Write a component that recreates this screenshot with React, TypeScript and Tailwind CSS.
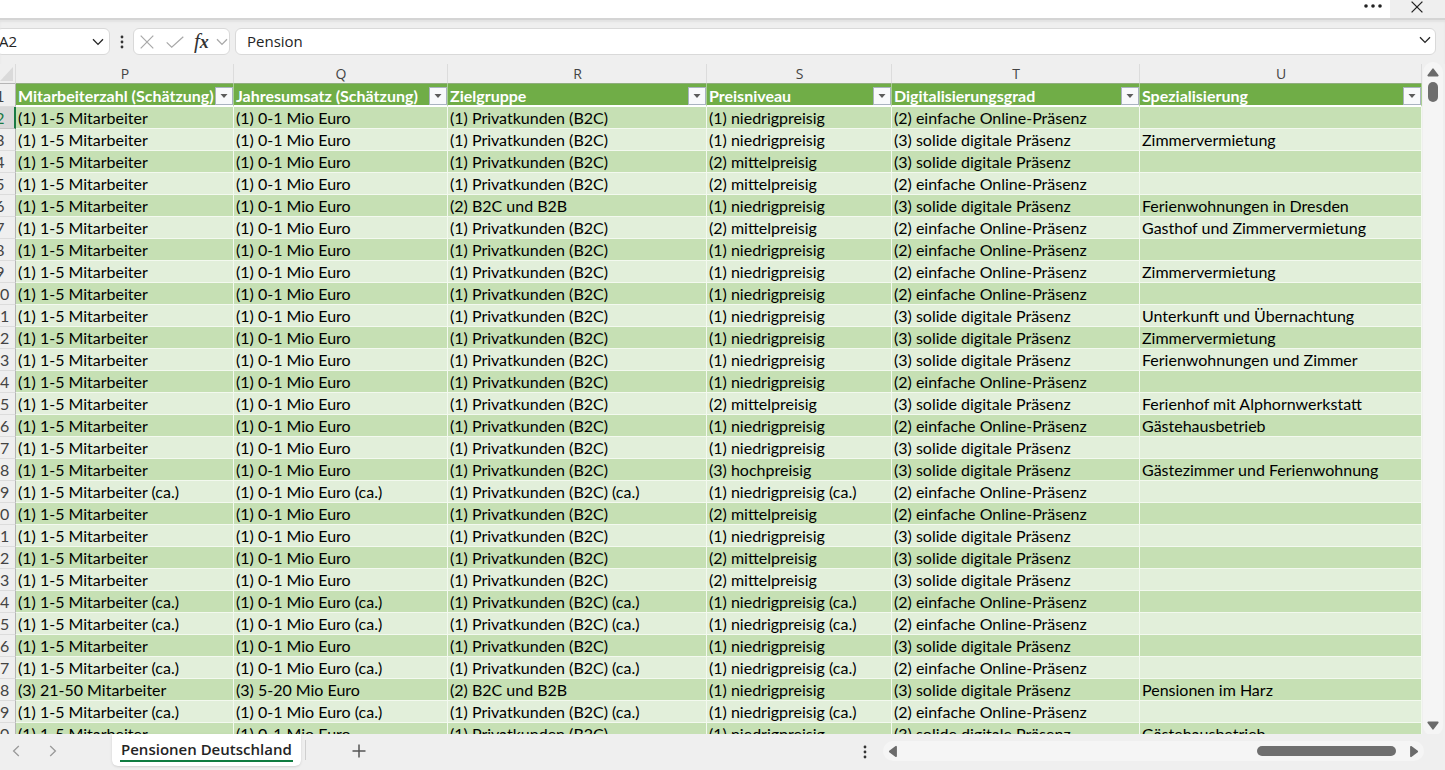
import { useState } from 'react';

type Row = [string, string, string, string, string, string];

const columns = [
  { letter: 'P', title: 'Mitarbeiterzahl (Schätzung)', width: 'w-[218px]' },
  { letter: 'Q', title: 'Jahresumsatz (Schätzung)', width: 'w-[214px]' },
  { letter: 'R', title: 'Zielgruppe', width: 'w-[259px]' },
  { letter: 'S', title: 'Preisniveau', width: 'w-[185px]' },
  { letter: 'T', title: 'Digitalisierungsgrad', width: 'w-[248px]' },
  { letter: 'U', title: 'Spezialisierung', width: '' },
];

const STAFF = '(1) 1-5 Mitarbeiter';
const SALES = '(1) 0-1 Mio Euro';
const B2C = '(1) Privatkunden (B2C)';
const MIXED = '(2) B2C und B2B';
const LOW = '(1) niedrigpreisig';
const MID = '(2) mittelpreisig';
const HIGH = '(3) hochpreisig';
const SIMPLE = '(2) einfache Online-Präsenz';
const SOLID = '(3) solide digitale Präsenz';

const entry = (price: string, digital: string, special = '', target = B2C): Row => [
  STAFF,
  SALES,
  target,
  price,
  digital,
  special,
];

const approx = (digital: string): Row => [
  `${STAFF} (ca.)`,
  `${SALES} (ca.)`,
  `${B2C} (ca.)`,
  `${LOW} (ca.)`,
  digital,
  '',
];

const rows: Row[] = [
  entry(LOW, SIMPLE),
  entry(LOW, SOLID, 'Zimmervermietung'),
  entry(MID, SOLID),
  entry(MID, SIMPLE),
  entry(LOW, SOLID, 'Ferienwohnungen in Dresden', MIXED),
  entry(MID, SIMPLE, 'Gasthof und Zimmervermietung'),
  entry(LOW, SIMPLE),
  entry(LOW, SIMPLE, 'Zimmervermietung'),
  entry(LOW, SIMPLE),
  entry(LOW, SOLID, 'Unterkunft und Übernachtung'),
  entry(LOW, SOLID, 'Zimmervermietung'),
  entry(LOW, SOLID, 'Ferienwohnungen und Zimmer'),
  entry(LOW, SIMPLE),
  entry(MID, SOLID, 'Ferienhof mit Alphornwerkstatt'),
  entry(LOW, SIMPLE, 'Gästehausbetrieb'),
  entry(LOW, SOLID),
  entry(HIGH, SOLID, 'Gästezimmer und Ferienwohnung'),
  approx(SIMPLE),
  entry(MID, SIMPLE),
  entry(LOW, SOLID),
  entry(MID, SOLID),
  entry(MID, SOLID),
  approx(SIMPLE),
  approx(SIMPLE),
  entry(LOW, SOLID),
  approx(SIMPLE),
  ['(3) 21-50 Mitarbeiter', '(3) 5-20 Mio Euro', MIXED, LOW, SOLID, 'Pensionen im Harz'],
  approx(SIMPLE),
  entry(LOW, SOLID, 'Gästehausbetrieb'),
];

function Chevron({ className }: { className: string }) {
  return (
    <svg viewBox="0 0 12 8" className={className} fill="none" stroke="currentColor" strokeWidth="1.3">
      <path d="M1 1.2 6 6.4l5-5.2" />
    </svg>
  );
}

function Triangle({ className }: { className: string }) {
  return (
    <svg viewBox="0 0 12 9" className={className} fill="currentColor" stroke="currentColor" strokeWidth="1.6" strokeLinejoin="round">
      <path d="M6 1.2 10.8 7.6H1.2z" />
    </svg>
  );
}

function TitleBar() {
  return (
    <header className="flex h-[18px] shrink-0 justify-end bg-white">
      <button type="button" aria-label="Mehr" className="flex w-[34px] items-start justify-center pt-1 text-[#222]">
        <svg viewBox="0 0 18 4" className="h-1 w-[18px]" fill="currentColor">
          <circle cx="2" cy="2" r="1.8" />
          <circle cx="9" cy="2" r="1.8" />
          <circle cx="16" cy="2" r="1.8" />
        </svg>
      </button>
      <button type="button" aria-label="Schließen" className="flex w-[55px] items-start justify-center bg-[#efefef] pt-px pr-0.5 text-[#222]">
        <svg viewBox="0 0 12 12" className="h-3 w-3" fill="none" stroke="currentColor" strokeWidth="1.3">
          <path d="M.6.6l10.8 10.8M11.4.6.6 11.4" />
        </svg>
      </button>
    </header>
  );
}

function FormulaBar() {
  const [value, setValue] = useState('Pension');

  return (
    <div className="flex h-[46px] shrink-0 items-start border-t-2 border-[#d4d4d4] bg-[#efefef] pt-2 pr-[9px] text-[15px] text-[#242424] shadow-[inset_0_2px_2px_#e2e2e2]">
      <div className="-ml-1 flex h-[27px] w-[114px] shrink-0 items-center rounded-md border border-[#d9d9d9] bg-white pr-1">
        <input aria-label="Namenfeld" defaultValue="A2" className="min-w-0 flex-1 pl-0.5 outline-none" />
        <button type="button" aria-label="Namen anzeigen" className="p-px">
          <Chevron className="h-2 w-3" />
        </button>
      </div>
      <svg viewBox="0 0 4 14" className="mt-[7px] mr-[9px] ml-[10px] h-[14px] w-1 shrink-0" fill="#333">
        <circle cx="2" cy="2" r="1.4" />
        <circle cx="2" cy="7" r="1.4" />
        <circle cx="2" cy="12" r="1.4" />
      </svg>
      <div className="flex h-[27px] w-[97px] shrink-0 items-center rounded-md border border-[#d9d9d9] bg-white pl-1.5 text-[#a8a8a8]">
        <button type="button" aria-label="Abbrechen">
          <svg viewBox="0 0 14 14" className="h-[14px] w-[14px]" fill="none" stroke="currentColor" strokeWidth="1.2">
            <path d="M.7.7l12.6 12.6M13.3.7.7 13.3" />
          </svg>
        </button>
        <button type="button" aria-label="Eingeben" className="ml-3">
          <svg viewBox="0 0 18 12" className="h-3 w-[18px]" fill="none" stroke="currentColor" strokeWidth="1.2">
            <path d="M.7 6.4 5.7 11.2 17.3.7" />
          </svg>
        </button>
        <button type="button" aria-label="Funktion einfügen" className="ml-[10px] flex items-baseline font-['Liberation_Serif',serif] leading-5 text-[#333] italic">
          <span className="text-[21px]">f</span>
          <span className="text-[18px] font-bold">x</span>
        </button>
        <button type="button" aria-label="Funktionsliste" className="ml-[7px]">
          <Chevron className="h-2 w-3" />
        </button>
      </div>
      <div className="ml-[5px] flex h-[27px] min-w-0 flex-1 items-center rounded-md border border-[#d9d9d9] bg-white pr-1">
        <input
          aria-label="Bearbeitungsleiste"
          value={value}
          onChange={(e) => setValue(e.target.value)}
          className="min-w-0 flex-1 pl-[11px] outline-none"
        />
        <button type="button" aria-label="Bearbeitungsleiste erweitern" className="pb-1">
          <Chevron className="h-2 w-3" />
        </button>
      </div>
    </div>
  );
}

function RowNumber({ n, active }: { n: number; active?: boolean }) {
  return (
    <th
      scope="row"
      className={
        active
          ? 'overflow-hidden border-r-2 border-b border-r-[#1a7a43] border-b-[#c4c4c4] bg-[#d8d8d8] p-0 font-normal text-[#1a7a43]'
          : 'overflow-hidden border-r border-b border-r-[#b5b5b5] border-b-[#dcdcdc] bg-[#efefef] p-0 font-normal text-[#444]'
      }
    >
      <div className="flex justify-end">
        <span className={active ? 'w-7 shrink-0 text-center' : 'w-[30px] shrink-0 text-center'}>{n}</span>
      </div>
    </th>
  );
}

function Sheet() {
  return (
    <div className="min-w-0 flex-1 overflow-hidden">
      <table className="w-full table-fixed border-separate border-spacing-0 text-left font-['Lato',sans-serif] text-base leading-[21px] whitespace-nowrap text-black">
        <colgroup>
          <col className="w-4" />
          {columns.map((c) => (
            <col key={c.letter} className={c.width} />
          ))}
        </colgroup>
        <thead>
          <tr className="h-5 bg-[#efefef] font-['Open_Sans',sans-serif] text-sm leading-[19px] text-[#444]">
            <td className="border-r border-b border-r-[#dcdcdc] border-b-[#b5b5b5] p-0">
              <svg viewBox="0 0 15 16" className="h-4 w-[13px]" fill="#dadada">
                <path d="M15 0v16H0V16z" />
              </svg>
            </td>
            {columns.map((c) => (
              <th key={c.letter} scope="col" className="border-r border-b border-r-[#dcdcdc] border-b-[#8fae7c] py-0 pr-0 pl-px text-center font-normal">
                {c.letter}
              </th>
            ))}
          </tr>
          <tr className="h-[23px]">
            <RowNumber n={1} />
            {columns.map((c) => (
              <th key={c.letter} scope="col" className="border-r border-b-2 border-r-[#a9cf92] border-b-white bg-[#70ad47] p-0 text-white">
                <div className="flex h-[21px] items-center justify-between pl-0.5">
                  <span className="pt-px">{c.title}</span>
                  <button
                    type="button"
                    aria-label={`${c.title} filtern`}
                    className="mt-0.5 flex h-[18px] w-[18px] shrink-0 items-center justify-center border border-[#a9b3c0] bg-[#f8f9fb]"
                  >
                    <svg viewBox="0 0 8 4" className="h-1 w-2" fill="#5c5c5c">
                      <path d="M.5 0h7L4 4z" />
                    </svg>
                  </button>
                </div>
              </th>
            ))}
          </tr>
        </thead>
        <tbody>
          {rows.map((row, i) => (
            <tr key={i} className="h-[22px] odd:bg-[#c6e0b4] even:bg-[#e2efda]">
              <RowNumber n={i + 2} active={i === 0} />
              {row.map((cell, j) => (
                <td key={j} className="border-r border-b border-[#f3f9ef] py-0 pr-0 pl-0.5">
                  {cell}
                </td>
              ))}
            </tr>
          ))}
        </tbody>
      </table>
    </div>
  );
}

function VerticalScroll() {
  return (
    <div className="flex w-[23px] shrink-0 justify-end pr-0.5">
      <div className="-mt-0.5 -mb-0.5 flex w-5 flex-col items-center rounded-full bg-[#f5f5f5] text-[#6b6b6b]">
        <button type="button" aria-label="Nach oben" className="pt-1.5">
          <Triangle className="block h-[9px] w-3" />
        </button>
        <div className="mt-[5px] h-5 w-[10px] rounded-full bg-[#6e6e6e]" />
        <button type="button" aria-label="Nach unten" className="mt-auto pb-1.5">
          <Triangle className="block h-[9px] w-3 rotate-180" />
        </button>
      </div>
    </div>
  );
}

function BottomBar() {
  return (
    <footer className="flex h-9 shrink-0 items-start bg-[#efefef] pr-[21px] text-[#777]">
      <nav className="flex shrink-0 items-start">
        <button type="button" aria-label="Vorheriges Blatt" className="mt-[11px] ml-[10px] flex h-3 w-3 items-center text-[#999]">
          <Chevron className="h-2 w-3 rotate-90" />
        </button>
        <button type="button" aria-label="Nächstes Blatt" className="mt-[11px] ml-[25px] flex h-3 w-3 items-center text-[#999]">
          <Chevron className="h-2 w-3 -rotate-90" />
        </button>
        <button type="button" className="ml-[53px] flex h-8 items-start rounded-b-md bg-white px-2 pt-1 font-['Open_Sans',sans-serif] text-[15px] font-semibold text-[#242424] shadow-sm">
          <span className="block h-6 border-b-2 border-[#107c41] px-px leading-[22px]">Pensionen Deutschland</span>
        </button>
        <span className="mt-1.5 ml-1 h-5 w-px bg-[#cfcfcf]" />
        <button type="button" aria-label="Neues Blatt" className="mt-[10px] ml-[46px] text-[#555]">
          <svg viewBox="0 0 14 14" className="h-[14px] w-[14px]" fill="none" stroke="currentColor" strokeWidth="1.5">
            <path d="M7 .5v13M.5 7h13" />
          </svg>
        </button>
      </nav>
      <div className="ml-auto flex w-[561px] shrink-0 items-start">
        <svg viewBox="0 0 4 14" className="mt-[11px] h-[14px] w-1 shrink-0" fill="#333">
          <circle cx="2" cy="2" r="1.4" />
          <circle cx="2" cy="7" r="1.4" />
          <circle cx="2" cy="12" r="1.4" />
        </svg>
        <div className="mt-[7px] ml-4 flex h-5 flex-1 items-center rounded-full bg-[#f5f5f5] px-1 text-[#6b6b6b]">
          <button type="button" aria-label="Nach links">
            <Triangle className="block h-[9px] w-3 -rotate-90" />
          </button>
          <div className="mr-3 ml-auto h-[10px] w-[139px] rounded-full bg-[#6e6e6e]" />
          <button type="button" aria-label="Nach rechts">
            <Triangle className="block h-[9px] w-3 rotate-90" />
          </button>
        </div>
      </div>
    </footer>
  );
}

export default function App() {
  return (
    <div className="flex h-screen flex-col overflow-hidden bg-[#efefef] font-['Open_Sans',sans-serif]">
      <TitleBar />
      <FormulaBar />
      <main className="flex min-h-0 flex-1">
        <Sheet />
        <VerticalScroll />
      </main>
      <BottomBar />
    </div>
  );
}
